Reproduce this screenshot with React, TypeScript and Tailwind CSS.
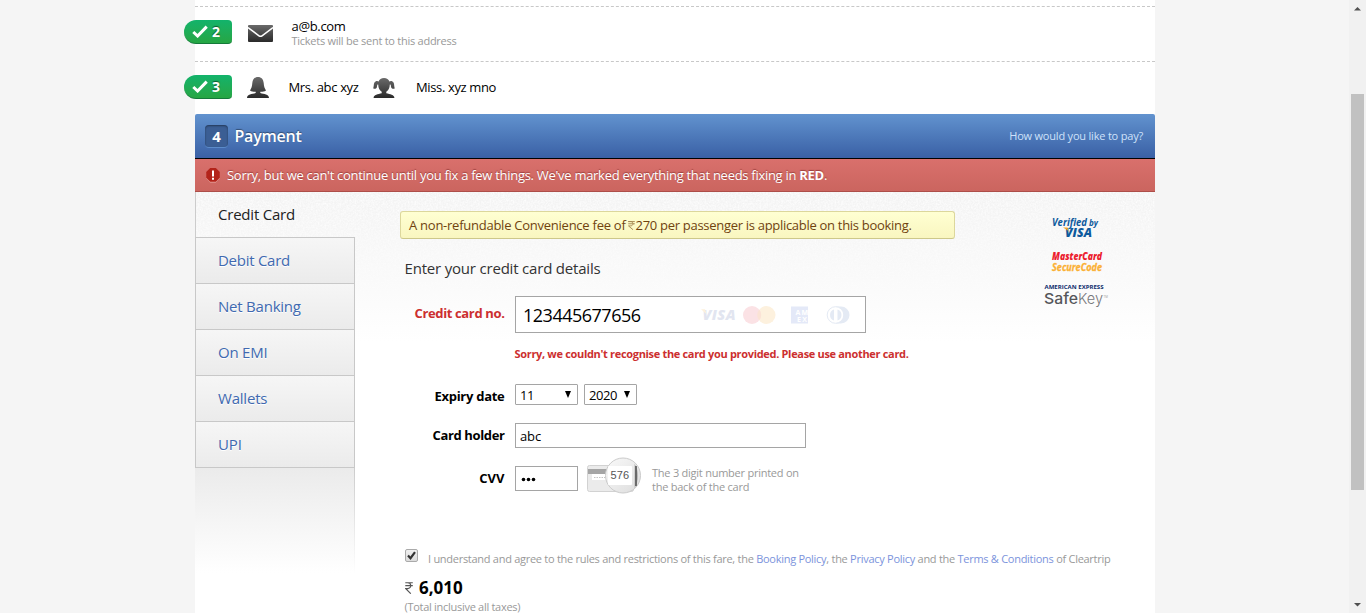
import React from 'react';

function StepBadge({ n }: { n: number }) {
  return (
    <div className="-ml-[11px] flex h-6 w-12 shrink-0 items-center rounded-l-[12px] rounded-r-[4px] border-b border-[#147a3a] bg-gradient-to-b from-[#12b36b] to-[#26a643] pl-2 text-white">
      <svg width="16" height="13" viewBox="0 0 16 13" className="shrink-0">
        <path d="M1.3 7 L5.6 11 L14.7 1.6" fill="none" stroke="#fff" strokeWidth="3" />
      </svg>
      <span className="ml-[4px] text-[14px] leading-[22px] font-bold [text-shadow:0_-1px_1px_rgba(0,0,0,0.5)]">{n}</span>
    </div>
  );
}

function IconGradient({ id }: { id: string }) {
  return (
    <defs>
      <linearGradient id={id} x1="0" y1="0" x2="0" y2="1">
        <stop offset="0" stopColor="#6a6a6a" />
        <stop offset="1" stopColor="#2a2a2a" />
      </linearGradient>
    </defs>
  );
}

function Envelope() {
  return (
    <svg width="25" height="17" viewBox="0 0 25 17" className="shrink-0">
      <IconGradient id="env" />
      <rect width="25" height="17" rx="1" fill="url(#env)" />
      <path d="M0 2.500 L11 10.800 Q12.500 11.900 14 10.800 L25 2.500" fill="none" stroke="#fff" strokeWidth="1.500" />
    </svg>
  );
}

function Woman() {
  return (
    <svg width="22" height="21" viewBox="0 0 22 21" className="shrink-0">
      <IconGradient id="woman" />
      <path fill="url(#woman)" d="M11 0C7.6 0 5.6 2.3 5.3 6C5.1 9.4 4.4 11.3 3 13.4C4.8 14.6 6.7 14.9 8.7 14.8V16C5 17.1 0 17.3 0 21H22C22 17.3 17 17.1 13.3 16V14.8C15.3 14.9 17.2 14.6 19 13.4C17.6 11.3 16.9 9.4 16.7 6C16.4 2.3 14.4 0 11 0Z" />
    </svg>
  );
}

function Girl() {
  return (
    <svg width="22" height="20" viewBox="0 0 22 20" className="shrink-0">
      <IconGradient id="girl" />
      <path fill="url(#girl)" d="M11 0C8.2 0 6.4 1.2 5.6 3.6C4.9 2.8 3.7 2.7 2.6 3.4C.2 5 1.3 7 .2 10.2C1.4 11.2 3.2 10.8 3.8 9.4C4.2 8.4 3.9 7.600 4.500 6.600L5.200 6.500C5.300 10 6.600 12.400 8.700 13.800V15.200C5 16.200.6 16.400.6 20H21.400C21.400 16.400 17 16.200 13.300 15.200V13.800C15.400 12.400 16.700 10 16.800 6.500L17.500 6.600C18.100 7.600 17.800 8.400 18.200 9.400C18.800 10.800 20.600 11.200 21.800 10.200C20.700 7 21.800 5 19.400 3.400C18.300 2.700 17.100 2.800 16.400 3.600C15.600 1.200 13.800 0 11 0Z" />
    </svg>
  );
}

function Rupee({ className, width, height }: { className: string; width: number; height: number }) {
  return (
    <svg width={width} height={height} viewBox="0 0 8 11" className={className} preserveAspectRatio="none">
      <path d="M.3 .7H7.8M.3 3.4H7.8M.3 .7H2.6C6.8 .7 6.8 6 2.6 6H.6L5.8 10.7" fill="none" stroke="currentColor" strokeWidth="1.1" />
    </svg>
  );
}

function CardBrands() {
  return (
    <svg width="150" height="20" viewBox="0 0 150 20" className="shrink-0">
      <text x="2.5" y="15" fontFamily="Open Sans, sans-serif" fontSize="14.5" fontWeight="800" fontStyle="italic" fill="#e2e5f0" textLength="33">VISA</text>
      <path d="M1 4.3H5L6.5 9Z" fill="#fdf1dc" />
      <circle cx="66.500" cy="10" r="9" fill="#fdf1de" />
      <circle cx="52" cy="10" r="9" fill="#fbe2e5" />
      <path d="M59.200 4.600A9 9 0 0 1 59.200 15.400A9 9 0 0 1 59.200 4.600Z" fill="#fbe3d5" />
      <rect x="91" y="1.500" width="17" height="17" fill="#e4e9f8" />
      <text x="95.500" y="9.500" fontFamily="Open Sans, sans-serif" fontSize="7" fontWeight="700" fill="#fff" textLength="12.500">AM</text>
      <text x="97" y="17" fontFamily="Open Sans, sans-serif" fontSize="7" fontWeight="700" fill="#fff" textLength="10">EX</text>
      <path d="M136 1.500H141A8.500 8.500 0 0 1 141 18.500H136Z" fill="#e4eaf4" />
      <circle cx="135.500" cy="10" r="8.300" fill="#fff" stroke="#e4eaf4" />
      <path d="M134 4.500A5.800 5.800 0 0 0 134 15.500ZM137.500 4.500A5.800 5.800 0 0 1 137.500 15.500Z" fill="#e4eaf4" />
    </svg>
  );
}

function SecurityLogos() {
  return (
    <svg width="70" height="96" viewBox="0 0 70 96" className="shrink-0" fontFamily="Open Sans, sans-serif">
      <g fill="#0e5a9d" fontStyle="italic" fontWeight="700">
        <text x="9" y="11.500" fontSize="10.500" textLength="35" lengthAdjust="spacingAndGlyphs">Verified</text>
        <text x="46" y="11.500" fontSize="8.500" textLength="9" lengthAdjust="spacingAndGlyphs">by</text>
        <text x="22" y="22.500" fontSize="12" fontWeight="800" textLength="27" lengthAdjust="spacingAndGlyphs">VISA</text>
      </g>
      <path d="M20 13.500H24.500L26 18.500Q24 15 20 13.500Z" fill="#f7a823" />
      <g fontStyle="italic">
        <text x="9" y="46" fontSize="11" fontWeight="800" fill="#ec1c2e" textLength="50" lengthAdjust="spacingAndGlyphs">MasterCard</text>
        <text x="9" y="56.500" fontSize="10.500" fontWeight="700" fill="#fbb034" stroke="#fbb034" strokeWidth=".3" textLength="50" lengthAdjust="spacingAndGlyphs">SecureCode</text>
      </g>
      <text x="1.500" y="75.300" fontSize="4.300" fontWeight="700" fill="#0d2c6c" textLength="59" lengthAdjust="spacingAndGlyphs">AMERICAN EXPRESS</text>
      <text x="1" y="90" fontSize="15" fontFamily="Inter, sans-serif" fontWeight="500" fill="#55565a" textLength="34" lengthAdjust="spacingAndGlyphs">Safe</text>
      <text x="35" y="90" fontSize="15" fontFamily="Inter, sans-serif" fontWeight="300" fill="#77787b" textLength="25" lengthAdjust="spacingAndGlyphs">Key</text>
      <text x="60.500" y="84" fontSize="3" fill="#999">TM</text>
    </svg>
  );
}

function CvvCard() {
  return (
    <svg width="55" height="38" viewBox="0 0 55 38" className="shrink-0">
      <defs>
        <linearGradient id="lens" x1="0" y1="0" x2="1" y2="1">
          <stop offset="0" stopColor="#fafafa" />
          <stop offset="1" stopColor="#dcdcdc" />
        </linearGradient>
      </defs>
      <rect x=".5" y="8.500" width="46" height="26" rx="2" fill="#ebebeb" stroke="#d2d2d2" />
      <rect x="1" y="12" width="45" height="5" fill="#a5a5a5" />
      <rect x="5" y="17" width="26" height="6" fill="#fff" />
      <path d="M7 20.500H19" stroke="#c4c4c4" strokeDasharray="1.500 1" />
      <circle cx="36" cy="18.500" r="17.500" fill="url(#lens)" stroke="#cbcbcb" />
      <path d="M47.500 6.500V31.500Q51 26 51 18.500Q51 12 47.500 6.500Z" fill="#b8b8b8" />
      <path d="M49 9V29" stroke="#555" strokeWidth="1.600" />
      <rect x="21" y="9" width="24" height="19" rx="1" fill="#fff" />
      <text x="23.500" y="22" fontFamily="Liberation Sans, sans-serif" fontSize="11" fill="#555" textLength="18.500">576</text>
    </svg>
  );
}

function PaperGrain() {
  return (
    <svg width="960" height="150" className="pointer-events-none absolute top-0 left-0 [mask-image:linear-gradient(#000,transparent)]">
      <filter id="grain">
        <feTurbulence type="fractalNoise" baseFrequency="0.6" numOctaves="2" seed="4" />
        <feColorMatrix values="0 0 0 0 1  0 0 0 0 1  0 0 0 0 1  1.6 0 0 0 -0.5" />
      </filter>
      <rect width="960" height="150" filter="url(#grain)" />
    </svg>
  );
}

const tabs = [
  { label: 'Debit Card', cls: 'tracking-[-0.27px]' },
  { label: 'Net Banking', cls: 'tracking-[-0.22px]' },
  { label: 'On EMI', cls: 'tracking-[-0.24px]' },
  { label: 'Wallets', cls: 'tracking-[-0.21px]' },
  { label: 'UPI', cls: 'tracking-[-0.15px]' },
];

function Label({ children, className }: { children: React.ReactNode; className: string }) {
  return <div className={`w-[149.5px] shrink-0 text-right text-[13px] font-bold ${className}`}>{children}</div>;
}

function Sidebar() {
  return (
    <div className="relative w-40 shrink-0">
      <div className="h-[45px] border-l border-[#ccc] pl-[22px] text-[15px] leading-[45px] tracking-[-0.21px] text-[#222]">Credit Card</div>
      <div className="border-r border-b border-l border-[#c8c8c8]">
        {tabs.map((t) => (
          <div key={t.label} className={`h-[46px] border-t border-[#c8c8c8] bg-gradient-to-b from-[#f6f6f6] to-[#ebebeb] pl-[22px] text-[15px] leading-[45px] font-medium text-[#4069b0] [text-shadow:0_1px_0_#fff] ${t.cls}`}>
            {t.label}
          </div>
        ))}
      </div>
      <div className="flex h-[105px] justify-end bg-gradient-to-b from-[#ebebeb] to-white">
        <div className="w-px bg-gradient-to-b from-[#ccc] to-white" />
      </div>
    </div>
  );
}

function Scrollbar() {
  return (
    <div className="flex h-full w-[17px] shrink-0 flex-col items-center bg-[#f1f1f1]">
      <svg width="17" height="17" viewBox="0 0 17 17"><path d="M8.500 7L12 10.500H5Z" fill="#505050" /></svg>
      <div className="mt-[77px] h-[396px] w-[13px] bg-[#c1c1c1]" />
      <svg width="17" height="17" viewBox="0 0 17 17" className="mt-auto"><path d="M8.500 10.500L12 7H5Z" fill="#505050" /></svg>
    </div>
  );
}

export default function App() {
  return (
    <div className="flex h-[613px] w-full justify-between overflow-hidden bg-[#f5f5f5] font-['Open_Sans','Noto_Sans',sans-serif] whitespace-nowrap text-black">
      <div className="ml-[195px] w-[960px] bg-white">
        <div className="mt-[6px] flex h-[55px] items-start border-t border-dashed border-[#c8c8c8]">
          <div className="mt-[13px]"><StepBadge n={2} /></div>
          <div className="mt-[18px] ml-4"><Envelope /></div>
          <div className="mt-[10px] ml-[18.5px]">
            <div className="text-[13px] leading-[18px] tracking-[-0.335px]">a@b.com</div>
            <div className="text-[11px] leading-[12px] tracking-[-0.255px] text-[#999]">Tickets will be sent to this address</div>
          </div>
        </div>
        <div className="flex h-[53px] items-start border-t border-dashed border-[#c8c8c8]">
          <div className="mt-[13px]"><StepBadge n={3} /></div>
          <div className="mt-[15px] ml-[15px]"><Woman /></div>
          <div className="mt-[15px] ml-[19.5px] w-[84.5px] text-[13px] leading-[20px] tracking-[-0.349px]">Mrs. abc xyz</div>
          <div className="mt-[16px]"><Girl /></div>
          <div className="mt-[15px] ml-[21px] text-[13px] leading-[20px] tracking-[-0.368px]">Miss. xyz mno</div>
        </div>

        <div className="flex h-[45px] items-center rounded-t-[2px] border-b border-black bg-gradient-to-b from-[#6293cf] to-[#3a60a5] pr-[12px] pl-[10px] text-white">
          <div className="h-[23px] w-[23px] rounded-[4px] border-b border-[#5c8bca] bg-[#3b5e94] text-center text-[15px] leading-[22px] font-bold shadow-[inset_0_1px_2px_rgba(0,0,0,0.4)]">4</div>
          <div className="ml-[6.5px] text-[16px] font-semibold tracking-[-0.237px] [text-shadow:0_-1px_1px_rgba(0,0,0,0.4)]">Payment</div>
          <div className="ml-auto text-[11px] tracking-[-0.2px] text-[#cfe2fa]">How would you like to pay?</div>
        </div>
        <div className="flex h-[33px] items-center border-b border-[#ad4e49] bg-gradient-to-b from-[#d9706c] to-[#cb655f] pl-[11px] text-white">
          <svg width="14" height="15" viewBox="0 0 14 15" className="shrink-0">
            <path d="M4.200 1H9.800L13.500 5V10.500L9.800 14.500H4.200L.5 10.500V5Z" fill="#e9a8a0" />
            <path d="M4.200 0H9.800L13.800 4V9.800L9.800 13.800H4.200L.2 9.800V4Z" fill="#b3231a" />
            <path d="M7 2.500V8.500M7 9.800V11.800" stroke="#fff" strokeWidth="2" />
          </svg>
          <div className="ml-[7px] pt-[2px] text-[13px] tracking-[-0.285px] [text-shadow:0_-1px_1px_rgba(100,20,20,0.5)]">
            Sorry, but we can't continue until you fix a few things. We've marked everything that needs fixing in <b>RED</b>.
          </div>
        </div>

        <div className="relative flex h-[421px] bg-[linear-gradient(#f3f3f3,#ffffff_150px)]">
          <PaperGrain />
          <Sidebar />
          <div className="relative w-[600px] shrink-0">
            <div className="mt-[19px] ml-[45px] flex h-[28px] w-[555px] items-center rounded-[3px] border border-[#dcd79c] border-b-[#cdc88a] bg-gradient-to-b from-[#ffffd2] to-[#f9f6c0] pl-[8px] text-[13px] text-[#70430f]">
              <span className="pt-px tracking-[-0.25px]">A non-refundable Convenience fee of</span>
              <Rupee width={7} height={9} className="mr-[1px] ml-[2px] text-[#a58650]" />
              <span className="pt-px tracking-[-0.296px]">270 per passenger is applicable on this booking.</span>
            </div>
            <div className="mt-[19px] ml-[49.5px] text-[15px] leading-[20px] tracking-[-0.193px] text-[#333]">Enter your credit card details</div>
            <div className="mt-[18px] flex">
              <Label className="leading-[35px] tracking-[-0.362px] text-[#cc2f2f]">Credit card no.</Label>
              <div className="ml-[10.5px] flex h-[37px] w-[351px] items-center justify-between border border-[#a5a5a5] bg-white pr-[15px] pl-[7px]">
                <span className="pt-[2px] text-[18px] tracking-[-0.5px]">123445677656</span>
                <CardBrands />
              </div>
            </div>
            <div className="mt-[13px] ml-[159.5px] text-[11px] leading-[16px] font-bold tracking-[-0.321px] text-[#cc2f2f]">Sorry, we couldn't recognise the card you provided. Please use another card.</div>
            <div className="mt-[22px] flex h-[21px]">
              <Label className="leading-[25px] tracking-[-0.28px]">Expiry date</Label>
              <div className="ml-[10.5px] flex h-[21px] w-[63px] items-center justify-between rounded-[1px] border border-[#a5a5a5] bg-white pr-[5px] pl-[4px] text-[13px] tracking-[-0.434px]">
                <span className="pt-[2px]">11</span>
                <svg width="8" height="7" viewBox="0 0 8 7" className="-mt-px"><path d="M1 0H7L4 7Z" /></svg>
              </div>
              <div className="ml-[6px] flex h-[21px] w-[53px] items-center justify-between rounded-[1px] border border-[#a5a5a5] bg-white pr-[5px] pl-[4px] text-[13px] tracking-[-0.434px]">
                <span className="pt-[2px]">2020</span>
                <svg width="8" height="7" viewBox="0 0 8 7" className="-mt-px"><path d="M1 0H7L4 7Z" /></svg>
              </div>
            </div>
            <div className="mt-[18px] flex h-[25px]">
              <Label className="leading-[25px] tracking-[-0.365px]">Card holder</Label>
              <div className="ml-[10.5px] h-[25px] w-[291px] border border-[#a5a5a5] bg-white pl-[4px] text-[13px] leading-[25px] tracking-[-0.135px]">abc</div>
            </div>
            <div className="mt-[10px] flex h-[38px]">
              <Label className="leading-[40px]">CVV</Label>
              <div className="mt-[8px] ml-[10.5px] flex h-[25px] w-[63px] items-center border border-[#a5a5a5] bg-white pl-[5px]">
                <svg width="16" height="6" viewBox="0 0 16 6"><circle cx="2.500" cy="3.500" r="1.800" /><circle cx="7.500" cy="3.500" r="1.800" /><circle cx="12.500" cy="3.500" r="1.800" /></svg>
              </div>
              <div className="-mt-[1px] ml-[9px]"><CvvCard /></div>
              <div className="mt-[8px] ml-[10px] text-[11px] leading-[14px] tracking-[-0.24px] text-[#999]">
                <div>The 3 digit number printed on</div>
                <div>the back of the card</div>
              </div>
            </div>
            <div className="mt-[53px] ml-[50px] flex">
              <div className="flex h-[13px] w-[13px] shrink-0 items-center justify-center rounded-[2px] border border-[#aaa] bg-gradient-to-b from-[#f0f0f0] to-[#dcdcdc]">
                <svg width="9" height="9" viewBox="0 0 9 9"><path d="M1 4.500L3.500 7.200L8 1.200" fill="none" stroke="#333" strokeWidth="2.200" /></svg>
              </div>
              <div className="mt-[2px] ml-[10px] text-[11px] leading-[16px] tracking-[-0.275px] text-[#999]">
                I understand and agree to the rules and restrictions of this fare, the <a className="text-[#7b93dc]">Booking Policy</a>, the <a className="text-[#7b93dc]">Privacy Policy</a> and the <a className="text-[#7b93dc]">Terms &amp; Conditions</a> of Cleartrip
              </div>
            </div>
            <div className="mt-[9px] ml-[50px] flex h-[24px] items-center">
              <Rupee width={8} height={12} className="text-[#555]" />
              <span className="ml-[6px] text-[17px] font-bold">6,010</span>
            </div>
            <div className="mt-[-1px] ml-[49.5px] text-[11px] leading-[15px] tracking-[-0.285px] text-[#999]">(Total inclusive all taxes)</div>
          </div>
          <div className="relative mt-[22px] ml-[88px]"><SecurityLogos /></div>
        </div>
      </div>
      <Scrollbar />
    </div>
  );
}
